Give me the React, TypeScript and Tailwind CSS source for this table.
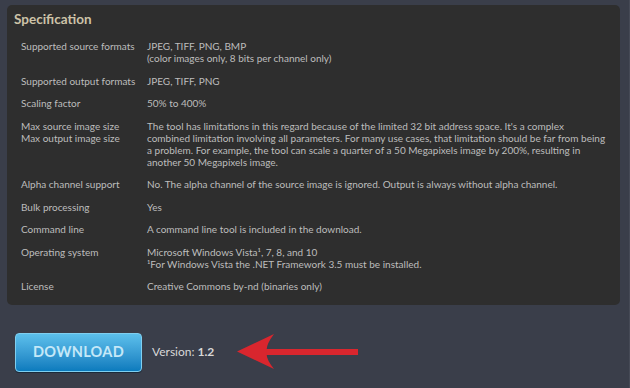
import React from 'react'

const specs: { label: string[]; value: React.ReactNode[] }[] = [
  {
    label: ['Supported source formats'],
    value: ['JPEG, TIFF, PNG, BMP', '(color images only, 8 bits per channel only)']
  },
  { label: ['Supported output formats'], value: ['JPEG, TIFF, PNG'] },
  { label: ['Scaling factor'], value: ['50% to 400%'] },
  {
    label: ['Max source image size', 'Max output image size'],
    value: [
      "The tool has limitations in this regard because of the limited 32 bit address space. It's a complex combined limitation involving all parameters. For many use cases, that limitation should be far from being a problem. For example, the tool can scale a quarter of a 50 Megapixels image by 200%, resulting in another 50 Megapixels image."
    ]
  },
  {
    label: ['Alpha channel support'],
    value: ['No. The alpha channel of the source image is ignored. Output is always without alpha channel.']
  },
  { label: ['Bulk processing'], value: ['Yes'] },
  { label: ['Command line'], value: ['A command line tool is included in the download.'] },
  {
    label: ['Operating system'],
    value: [
      'Microsoft Windows Vista¹, 7, 8, and 10',
      '¹For Windows Vista the .NET Framework 3.5 must be installed.'
    ]
  },
  { label: ['License'], value: ['Creative Commons by-nd (binaries only)'] }
]

function Arrow() {
  return (
    <svg width="124" height="36" viewBox="0 0 124 36" className="block">
      <rect x="28" y="15" width="93" height="6" fill="#d9262e" />
      <path d="M0 17.5 L37 0 Q28 12 30 18 Q28 24 37 35 Z" fill="#d9262e" />
    </svg>
  )
}

export default function App() {
  return (
    <div
      className="w-[630px] h-[388px] bg-[#3a3e4a] pt-[5px] pl-[7px] pr-[9px] border-r border-[#464a56]"
      style={{ fontFamily: 'Lato, "Open Sans", sans-serif' }}
    >
      <div className="rounded-[5px] bg-[#2e2e2e] pl-[7px] pr-[14px] pt-[2px] pb-[7px]">
        <h2 className="text-[13.5px] font-bold leading-[24px] text-[#cdc3a8]">Specification</h2>
        <div className="mt-[4px] pl-[7px] text-[10px] leading-[12px] text-[#bdbdbd]">
          {specs.map((row, i) => (
            <div key={i} className="flex py-[5.25px]">
              <div className="w-[126px] shrink-0">
                {row.label.map((l, j) => (
                  <div key={j}>{l}</div>
                ))}
              </div>
              <div className="flex-1">
                {row.value.map((v, j) => (
                  <div key={j}>{v}</div>
                ))}
              </div>
            </div>
          ))}
        </div>
      </div>
      <div className="flex items-center mt-[28px] ml-[8px]">
        <button className="w-[127px] h-[39px] rounded-[4px] border border-[#7fcff0] bg-gradient-to-b from-[#5cc0ec] to-[#0a7bbd] text-[14.5px] font-bold tracking-[0.3px] text-[#c4e8f8] shadow-[0_1px_0_#1b2a3a]">
          DOWNLOAD
        </button>
        <div className="ml-[10px] text-[12px] text-[#d8d8d8]">
          Version: <span className="font-bold">1.2</span>
        </div>
        <div className="ml-[23px]">
          <Arrow />
        </div>
      </div>
    </div>
  )
}
